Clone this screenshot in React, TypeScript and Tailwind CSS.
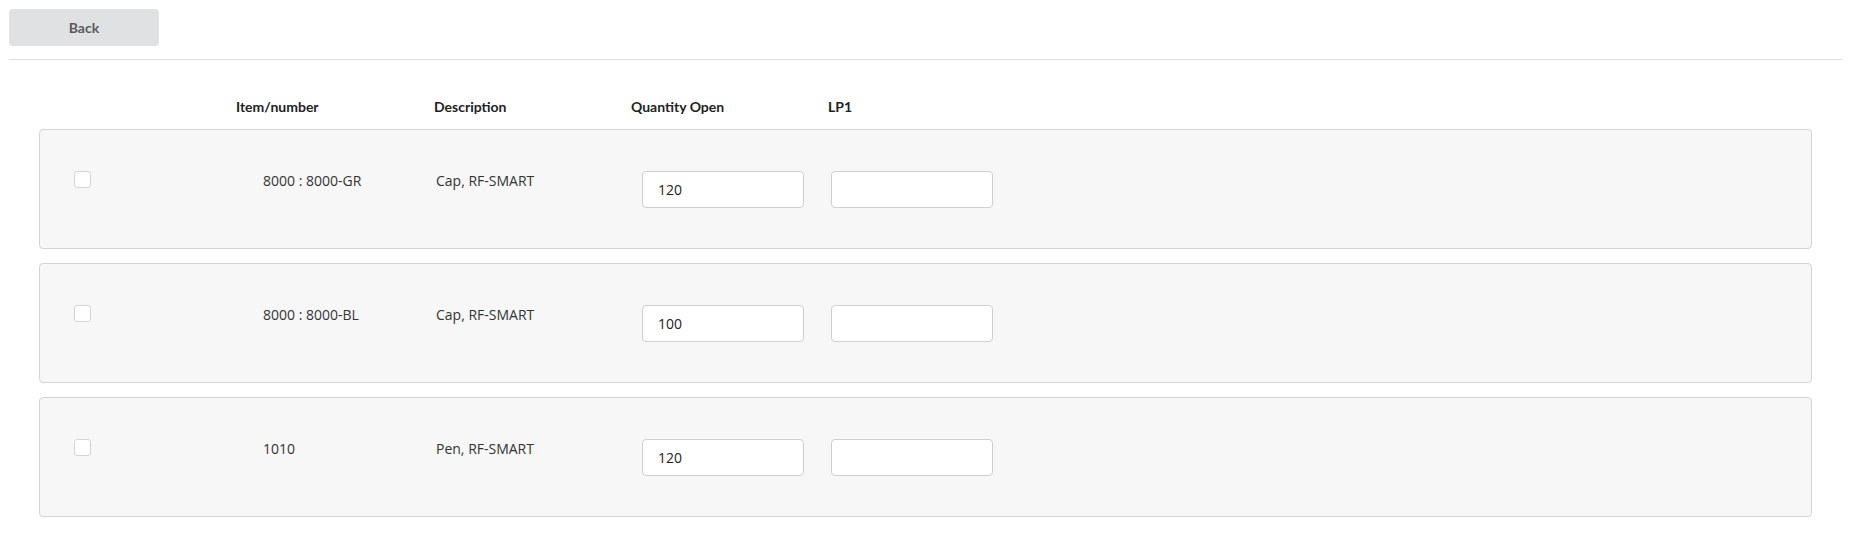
import { useState } from 'react'

interface Line {
    id: string;
    item: string;
    description: string;
    quantity: string;
}

const lines: Line[] = [
    { id: '1', item: '8000 : 8000-GR', description: 'Cap, RF-SMART', quantity: '120' },
    { id: '2', item: '8000 : 8000-BL', description: 'Cap, RF-SMART', quantity: '100' },
    { id: '3', item: '1010', description: 'Pen, RF-SMART', quantity: '120' },
]

const cols = 'grid grid-cols-[196px_198px_197px_197px_1fr]'

function LineCard({ line }: { line: Line }) {
    const [checked, setChecked] = useState(false)
    const [qty, setQty] = useState(line.quantity)
    const [lp, setLp] = useState('')

    return (
        <div className={`${cols} h-[120px] pt-[41px] bg-[#f7f7f7] border border-[#d4d4d5] rounded-[4px]`}>
            <div className="pl-[34px]">
                <button
                    onClick={() => setChecked(!checked)}
                    className="block w-[17px] h-[17px] bg-white border border-[#d4d4d5] rounded-[3px]"
                />
            </div>
            <div className="pl-[27px] text-[14px] leading-[20px] text-[#333]">{line.item}</div>
            <div className="pl-[2px] text-[14px] leading-[20px] text-[#333]">{line.description}</div>
            <div className="pl-[11px]">
                <input
                    value={qty}
                    onChange={(e) => setQty(e.target.value)}
                    className="w-[162px] h-[37px] px-[15px] bg-white border border-[#cfcfcf] rounded-[4px] text-[14px] text-[#222] outline-none"
                />
            </div>
            <div className="pl-[3px]">
                <input
                    value={lp}
                    onChange={(e) => setLp(e.target.value)}
                    className="w-[162px] h-[37px] px-[15px] bg-white border border-[#cfcfcf] rounded-[4px] text-[14px] text-[#222] outline-none"
                />
            </div>
        </div>
    )
}

export default function App() {
    return (
        <div className="min-h-screen bg-white pl-[9px] pr-[18px] pt-[9px] font-['Open_Sans',sans-serif]">
            <button className="w-[150px] h-[37px] bg-[#e0e1e2] rounded-[4px] font-['Lato',sans-serif] font-bold text-[14px] text-[#5a5a5a]">
                Back
            </button>

            <div className="mt-[13px] border-t border-[#dedede]" />

            <div className="mx-[30px]">
                <div className={`${cols} mt-[37px] mb-[12px] px-px font-['Lato',sans-serif] font-bold text-[14px] leading-[20px] text-[#222]`}>
                    <div />
                    <div>Item/number</div>
                    <div>Description</div>
                    <div>Quantity Open</div>
                    <div>LP1</div>
                </div>

                <div className="flex flex-col gap-[14px]">
                    {lines.map((line) => (
                        <LineCard key={line.id} line={line} />
                    ))}
                </div>
            </div>
        </div>
    )
}
